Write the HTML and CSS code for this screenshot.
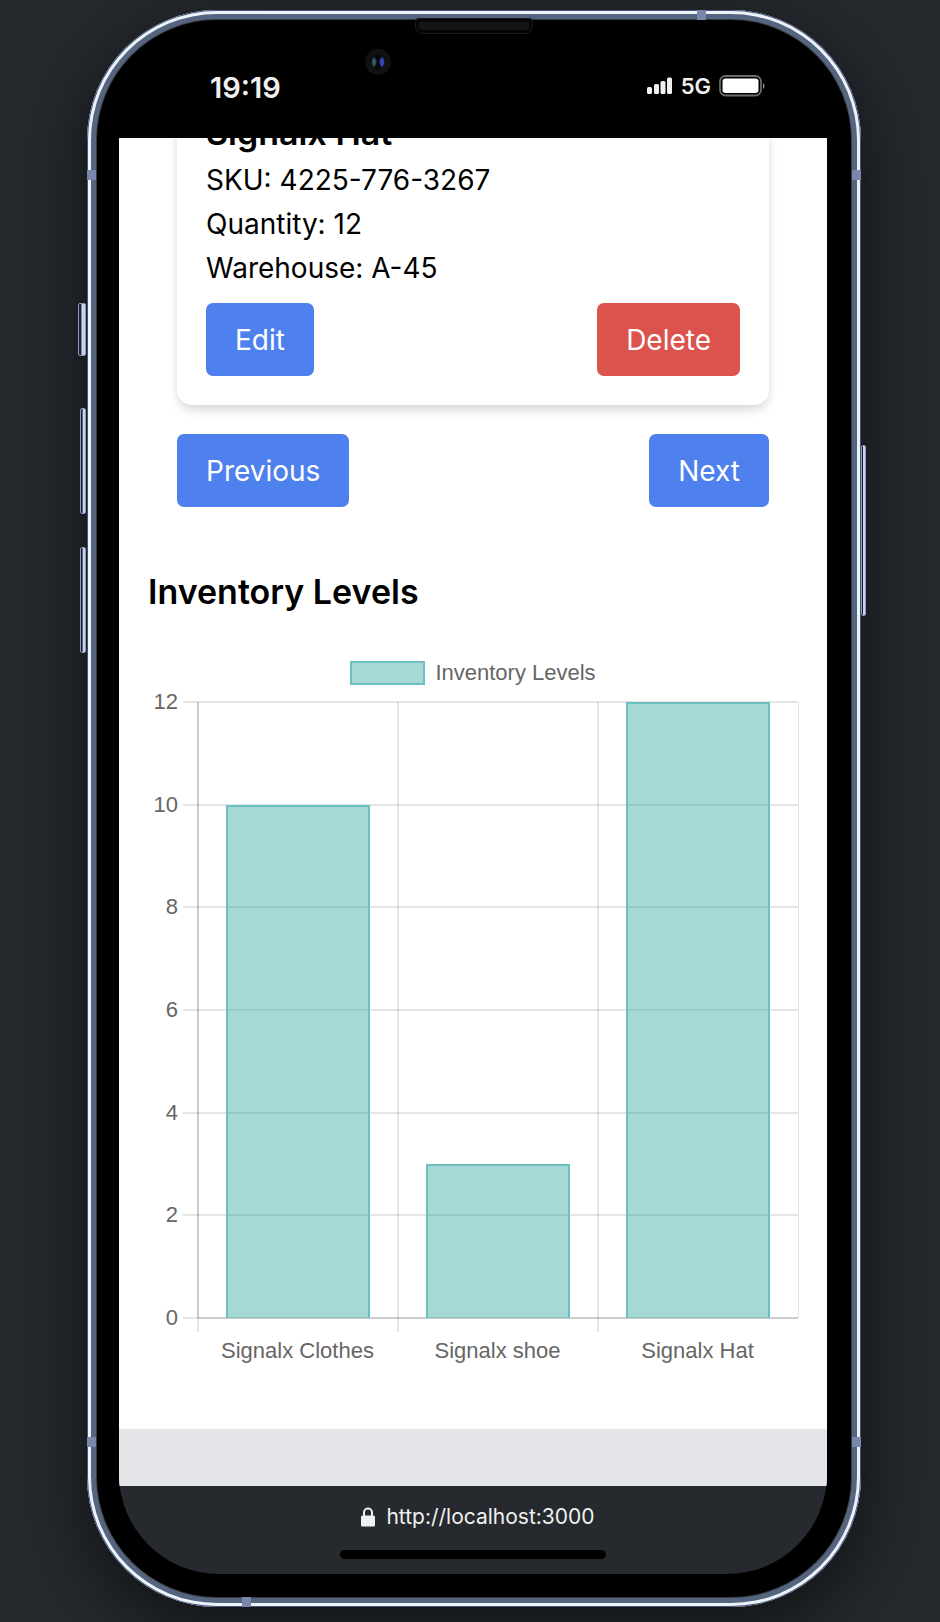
FILE: index.html
```html
<!DOCTYPE html>
<html lang="en">
<head>
<meta charset="utf-8">
<meta name="viewport" content="width=device-width, initial-scale=1">
<title>Inventory</title>
<link rel="stylesheet" href="styles.css">
</head>
<body>
<div class="phone">
  <span class="key key-mute"></span>
  <span class="key key-up"></span>
  <span class="key key-down"></span>
  <span class="key key-power"></span>
  <span class="band band-top"></span>
  <span class="band band-left"></span>
  <span class="band band-right"></span>
  <span class="band band-left band-low"></span>
  <span class="band band-right band-low"></span>
  <span class="band band-bottom"></span>
  <span class="speaker"></span>
  <span class="camera"></span>

  <div class="screen">
    <header class="status">
      <span class="clock">19:19</span>
      <div class="signals">
        <svg width="26" height="18" viewBox="0 0 26 18" fill="#f0f0f0" aria-hidden="true">
          <rect x="0" y="10" width="5" height="7" rx="1.5"/><rect x="7" y="7" width="5" height="10" rx="1.5"/><rect x="13.500" y="4" width="5" height="13" rx="1.5"/><rect x="20" y="0.500" width="5" height="16.500" rx="1.5"/>
        </svg>
        <span class="network">5G</span>
        <svg width="46" height="22" viewBox="0 0 46 22" aria-hidden="true">
          <rect x="1" y="1" width="41" height="19.500" rx="5.500" fill="none" stroke="#6b6b6b" stroke-width="1.800"/>
          <rect x="3.500" y="3.500" width="36" height="14.500" rx="3" fill="#fff"/>
          <path d="M44 8c2 1 2 5 0 6z" fill="#8a8a8a"/>
        </svg>
      </div>
    </header>

    <main class="page">
      <article class="card">
        <h2 class="title">Signalx Hat</h2>
        <p class="line">SKU: 4225-776-3267</p>
        <p class="line">Quantity: 12</p>
        <p class="line">Warehouse: A-45</p>
        <div class="actions">
          <button class="btn" type="button">Edit</button>
          <button class="btn btn-danger" type="button">Delete</button>
        </div>
      </article>
      <nav class="pager">
        <button class="btn" type="button">Previous</button>
        <button class="btn" type="button">Next</button>
      </nav>

      <section class="levels">
        <h2 class="title">Inventory Levels</h2>
        <div class="legend"><span class="swatch"></span>Inventory Levels</div>
        <div class="chart">
          <div class="y-axis">
            <span>12</span><span>10</span><span>8</span><span>6</span><span>4</span><span>2</span><span>0</span>
          </div>
          <div class="plot">
            <svg class="grid" width="100%" height="100%" aria-hidden="true">
              <g stroke="#000" stroke-opacity="0.1" stroke-width="2">
                <line x1="-15" x2="100%" y1="0" y2="0"/>
                <line x1="-15" x2="100%" y1="16.667%" y2="16.667%"/>
                <line x1="-15" x2="100%" y1="33.333%" y2="33.333%"/>
                <line x1="-15" x2="100%" y1="50%" y2="50%"/>
                <line x1="-15" x2="100%" y1="66.667%" y2="66.667%"/>
                <line x1="-15" x2="100%" y1="83.333%" y2="83.333%"/>
                <line x1="-15" x2="100%" y1="100%" y2="100%"/>
                <line x1="0" x2="0" y1="0" y2="100%"/>
                <line x1="33.333%" x2="33.333%" y1="0" y2="100%"/>
                <line x1="66.667%" x2="66.667%" y1="0" y2="100%"/>
                <line x1="100%" x2="100%" y1="0" y2="100%" stroke-width="1"/>
                <line x1="0" x2="0" y1="0" y2="100%"/>
                <line x1="0" x2="100%" y1="100%" y2="100%"/>
              </g>
            </svg>
            <div class="slot"><span class="bar" style="height:83.333%"></span></div>
            <div class="slot"><span class="bar" style="height:25%"></span></div>
            <div class="slot"><span class="bar" style="height:100%"></span></div>
          </div>
          <div class="x-axis">
            <span>Signalx Clothes</span><span>Signalx shoe</span><span>Signalx Hat</span>
          </div>
        </div>
      </section>
      <div class="page-end"></div>
    </main>

    <footer class="browser">
      <div class="address">
        <svg width="14" height="20" viewBox="0 0 14 20" aria-hidden="true">
          <path d="M3 9V5.500a4 4 0 0 1 8 0V9" fill="none" stroke="#f0f0f0" stroke-width="2"/>
          <rect x="0" y="8.500" width="14" height="11" rx="1.500" fill="#f0f0f0"/>
        </svg>
        <span>http://localhost:3000</span>
      </div>
      <div class="home"></div>
    </footer>
  </div>
</div>
</body>
</html>
```

FILE: styles.css
```css
* { box-sizing: border-box; }

body {
  margin: 0;
  padding: 10px 79px 15px 87px;
  min-height: 100vh;
  background: #262a2f;
  font-family: Inter, "Liberation Sans", sans-serif;
  overflow-x: hidden;
}

h2, p { margin: 0; }

/* Device frame */
.phone {
  position: relative;
  padding: 10px 34px 33px 32px;
  border-radius: 130px;
  background: #000;
  box-shadow:
    inset 0 0 0 1px #43557c,
    inset 0 0 0 4px #edf2f9,
    inset 0 0 0 9px #55657f,
    inset 0 0 0 10px #373a40,
    0 20px 70px 10px rgba(0, 0, 0, 0.5);
}

.key {
  position: absolute;
  left: -7px;
  width: 6px;
  height: 106px;
  border: 1px solid #8a9cbd;
  border-radius: 2px;
  background: linear-gradient(90deg, #1b2230 30%, #ccd5e8 50%);
}
.key-mute { top: 293px; left: -9px; width: 8px; height: 53px; }
.key-up { top: 398px; }
.key-down { top: 537px; }
.key-power { top: 435px; left: auto; right: -5px; width: 5px; height: 171px; }

.band { position: absolute; width: 9px; height: 10px; background: #7987ac; }
.band-top { top: 0; right: 155px; }
.band-left { left: 0; top: 160px; }
.band-right { right: 0; top: 160px; }
.band-low { top: auto; bottom: 160px; }
.band-bottom { left: 155px; bottom: 0; }

.speaker {
  position: absolute;
  top: 9px;
  left: 50%;
  width: 116px;
  height: 14px;
  margin-left: -58px;
  border: 3px solid #060606;
  border-radius: 2px 2px 7px 7px;
  background: #141414;
  outline: 1px solid #1c1c1c;
}

.camera {
  position: absolute;
  top: 39px;
  left: 278px;
  width: 26px;
  height: 26px;
  border-radius: 50%;
  background:
    radial-gradient(ellipse 3px 6px at 17px 13px, #3347b8 50%, transparent),
    radial-gradient(ellipse 3px 6px at 9px 13px, #3f5b68 40%, transparent),
    radial-gradient(circle, #05060c 7px, #111 8px);
}

.screen {
  overflow: hidden;
  border-radius: 120px 120px 100px 100px;
  background: #000;
}

/* Status bar */
.status {
  display: flex;
  justify-content: space-between;
  align-items: center;
  height: 118px;
  padding: 17px 62px 0 91px;
  color: #f0f0f0;
  font-weight: 600;
}
.clock { font-size: 29px; }
.signals { display: flex; align-items: center; gap: 8px; padding-bottom: 4px; }
.network { font-size: 22px; line-height: 22px; }

/* Page */
.page { overflow: hidden; background: #fff; color: #000; font-size: 28px; line-height: 44px; }

.card {
  margin: -60px 58px 0;
  padding: 29px;
  border-radius: 15px;
  background: #fff;
  box-shadow: 0 7px 11px -2px rgba(0, 0, 0, 0.13), 0 2px 11px rgba(0, 0, 0, 0.05);
}
.title { font-size: 34px; font-weight: 600; line-height: 51px; }

.actions, .pager { display: flex; justify-content: space-between; }
.actions { margin-top: 13px; }
.pager { margin: 29px 58px 0; }

.btn {
  padding: 15px 29px 14px;
  border: 0;
  border-radius: 7px;
  background: #4f81ee;
  color: #fff;
  font-family: inherit;
  font-size: 28px;
  line-height: 44px;
}
.btn-danger { background: #dc534d; }

/* Chart */
.levels { padding: 59px 29px 66px; }

.legend {
  display: flex;
  justify-content: center;
  align-items: center;
  gap: 10px;
  margin: 44px 0 17px;
}
.legend, .y-axis, .x-axis {
  color: #666;
  font-family: "Liberation Sans", Arial, sans-serif;
  font-size: 22px;
  line-height: 24px;
}
.swatch {
  width: 75px;
  height: 24px;
  border: 2px solid #6cc1c0;
  background: #a6d8d6;
}

.chart { display: grid; grid-template-columns: 30px 1fr; column-gap: 20px; }
.y-axis {
  display: flex;
  flex-direction: column;
  justify-content: space-between;
  margin: -12px 0;
  text-align: right;
}
.plot {
  position: relative;
  display: grid;
  grid-template-columns: repeat(3, 1fr);
  aspect-ratio: 600 / 616;
}
.grid { position: absolute; inset: 0; overflow: visible; shape-rendering: crispEdges; }
.slot { position: relative; display: flex; align-items: flex-end; justify-content: center; }
.bar {
  width: 72%;
  border: 2px solid #6cc1c0;
  border-bottom: 0;
  background: rgba(77, 177, 174, 0.5);
  background-clip: padding-box;
}
.x-axis {
  grid-column: 2;
  display: grid;
  grid-template-columns: repeat(3, 1fr);
  text-align: center;
  white-space: nowrap;
}
.x-axis span {
  margin-left: -1px;
  padding-top: 21px;
  background: linear-gradient(#e5e5e5, #e5e5e5) 0 0 / 2px 14px no-repeat;
}

.page-end { height: 57px; background: #e5e6ea; }

/* Browser bar */
.browser { height: 88px; padding-top: 18px; background: #26292e; color: #f0f0f0; }
.address {
  display: flex;
  justify-content: center;
  align-items: center;
  gap: 11px;
  padding-left: 10px;
  font-size: 21px;
  line-height: 26px;
}
.home { width: 266px; height: 9px; margin: 20px auto 0; border-radius: 5px; background: #000; }
```
